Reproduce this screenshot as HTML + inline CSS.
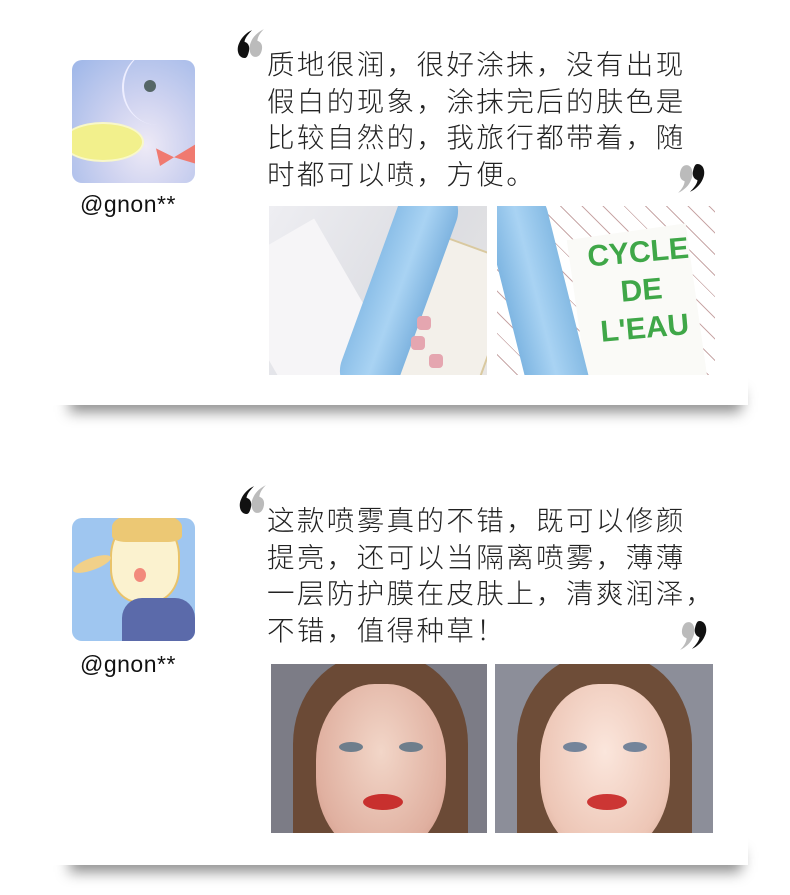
<!DOCTYPE html>
<html><head><meta charset="utf-8"><style>
*{margin:0;padding:0;box-sizing:border-box}
body{width:790px;height:895px;background:#fff;position:relative;overflow:hidden;font-family:"Liberation Sans","Noto Sans CJK SC",sans-serif}
.shadow{position:absolute;height:20px;background:rgba(0,0,0,.45);filter:blur(7px);transform:skewX(-4deg)}
.card{position:absolute;left:50px;width:698px;background:#fff}
.abs{position:absolute}
.av{position:absolute;left:72px;width:123px;height:123px;border-radius:10px;overflow:hidden}
.name{position:absolute;left:80px;font-size:23px;letter-spacing:0.5px;color:#111;font-family:"Liberation Sans",sans-serif}
.txt{position:absolute;left:267px;font-size:27.5px;letter-spacing:2.4px;line-height:36.5px;color:#222;font-family:"Noto Sans CJK SC",sans-serif;font-weight:300;white-space:nowrap}
.img{position:absolute;overflow:hidden}
</style></head><body>

<div class="shadow" style="left:70px;top:392px;width:672px"></div>
<div class="shadow" style="left:70px;top:852px;width:672px"></div>
<div class="card" style="top:0;height:405px"></div>
<div class="card" style="top:440px;height:425px"></div>

<!-- card 1 -->
<div class="av" style="top:60px;background:radial-gradient(ellipse at 60% 70%,#eeeaf6 0,#cfd3f0 40%,#9db6e8 100%)">
  <div class="abs" style="left:-10px;top:62px;width:82px;height:40px;border-radius:50%;background:#f2f08c;border:2px solid #fff8"></div>
  <div class="abs" style="left:72px;top:20px;width:12px;height:12px;border-radius:50%;background:#566"></div>
  <div class="abs" style="left:50px;top:-10px;width:70px;height:75px;border-left:2px solid #eef;border-radius:50%"></div>
  <div class="abs" style="left:84px;top:84px;width:40px;height:22px;background:#f07a70;clip-path:polygon(0 20%,45% 60%,100% 0,100% 90%,45% 60%,10% 100%)"></div>
</div>
<div class="name" style="top:191px">@gnon**</div>
<svg class="abs" style="left:236px;top:28px" width="30" height="30" viewBox="0 0 28 28">
<path d="M18 27c-5 0-7-8-4-14 2-5 6-9 12-12-4 4-6 8-6 11 4 1 5 5 4 9-1 4-3 6-6 6z" fill="#bbb"/>
<path d="M8 28c-6 0-8-8-5-14 2-5 7-10 12-12-4 4-7 8-7 11 4 1 5 5 4 9-1 4-2 6-4 6z" fill="#111"/>
</svg>
<div class="txt" style="top:44px">质地很润，很好涂抹，没有出现<br>假白的现象，涂抹完后的肤色是<br>比较自然的，我旅行都带着，随<br>时都可以喷，方便。</div>
<svg class="abs" style="left:676px;top:164px;transform:rotate(180deg)" width="30" height="30" viewBox="0 0 28 28">
<path d="M18 27c-5 0-7-8-4-14 2-5 6-9 12-12-4 4-6 8-6 11 4 1 5 5 4 9-1 4-3 6-6 6z" fill="#bbb"/>
<path d="M8 28c-6 0-8-8-5-14 2-5 7-10 12-12-4 4-7 8-7 11 4 1 5 5 4 9-1 4-2 6-4 6z" fill="#111"/>
</svg>

<div class="img" style="left:269px;top:206px;width:218px;height:169px;background:linear-gradient(120deg,#eeeef2,#dcdde2 60%,#e8e6e4)">
  <div class="abs" style="left:-20px;top:30px;width:110px;height:150px;background:#f6f5f7;transform:rotate(-30deg)"></div>
  <div class="abs" style="left:150px;top:40px;width:80px;height:150px;background:#f3f0ea;border:2px solid #d9c9a0;transform:rotate(20deg)"></div>
  <div class="abs" style="left:100px;top:-30px;width:60px;height:230px;border-radius:30px;background:linear-gradient(90deg,#8cbfe8,#a9d3f3 50%,#7fb4e0);transform:rotate(20deg)"></div>
  <div class="abs" style="left:148px;top:110px;width:14px;height:14px;border-radius:4px;background:#e5a6b0"></div>
  <div class="abs" style="left:142px;top:130px;width:14px;height:14px;border-radius:4px;background:#e5a6b0"></div>
  <div class="abs" style="left:160px;top:148px;width:14px;height:14px;border-radius:4px;background:#e5a6b0"></div>
</div>
<div class="img" style="left:497px;top:206px;width:218px;height:169px;background:repeating-linear-gradient(45deg,#fff 0 14px,#c9a8a8 14px 15px),#fff">
  <div class="abs" style="left:80px;top:25px;width:120px;height:155px;background:#fafaf7;transform:rotate(-8deg)"></div>
  <div class="abs" style="left:92px;top:28px;font:bold 30px 'Liberation Sans',sans-serif;color:#3fa748;transform:rotate(-5deg);line-height:38px;text-align:center;width:105px">CYCLE<br>DE<br>L'EAU</div>
  <div class="abs" style="left:10px;top:-20px;width:62px;height:230px;border-radius:30px;background:linear-gradient(90deg,#7fb6e2,#a9d3f3 50%,#86bbe4);transform:rotate(-14deg)"></div>
</div>

<!-- card 2 -->
<div class="av" style="top:518px;background:#9fc6f0">
  <div class="abs" style="left:38px;top:0px;width:70px;height:85px;border-radius:45% 45% 40% 40%;background:#fbf2cf;border:2px solid #e9c36a"></div>
  <div class="abs" style="left:40px;top:-6px;width:70px;height:30px;background:#ecc874;border-radius:50% 50% 20% 20%"></div>
  <div class="abs" style="left:50px;top:80px;width:73px;height:50px;background:#5b6aaa;border-radius:20px 20px 0 0"></div>
  <div class="abs" style="left:62px;top:50px;width:12px;height:14px;border-radius:50%;background:#f28a7c"></div>
  <div class="abs" style="left:0px;top:40px;width:40px;height:12px;background:#f1d089;border-radius:50%;transform:rotate(-20deg)"></div>
</div>
<div class="name" style="top:651px">@gnon**</div>
<svg class="abs" style="left:238px;top:484px" width="30" height="30" viewBox="0 0 28 28">
<path d="M18 27c-5 0-7-8-4-14 2-5 6-9 12-12-4 4-6 8-6 11 4 1 5 5 4 9-1 4-3 6-6 6z" fill="#bbb"/>
<path d="M8 28c-6 0-8-8-5-14 2-5 7-10 12-12-4 4-7 8-7 11 4 1 5 5 4 9-1 4-2 6-4 6z" fill="#111"/>
</svg>
<div class="txt" style="top:500px">这款喷雾真的不错，既可以修颜<br>提亮，还可以当隔离喷雾，薄薄<br>一层防护膜在皮肤上，清爽润泽，<br>不错，值得种草！</div>
<svg class="abs" style="left:678px;top:621px;transform:rotate(180deg)" width="30" height="30" viewBox="0 0 28 28">
<path d="M18 27c-5 0-7-8-4-14 2-5 6-9 12-12-4 4-6 8-6 11 4 1 5 5 4 9-1 4-3 6-6 6z" fill="#bbb"/>
<path d="M8 28c-6 0-8-8-5-14 2-5 7-10 12-12-4 4-7 8-7 11 4 1 5 5 4 9-1 4-2 6-4 6z" fill="#111"/>
</svg>

<div class="img" style="left:271px;top:664px;width:216px;height:169px;background:#7c7c86">
  <div class="abs" style="left:22px;top:-10px;width:175px;height:200px;border-radius:45% 45% 10% 10%;background:#6b4a36"></div>
  <div class="abs" style="left:45px;top:20px;width:130px;height:170px;border-radius:45%;background:radial-gradient(ellipse at 50% 40%,#f2d6c8,#e0b0a0 70%,#c98f7e)"></div>
  <div class="abs" style="left:68px;top:78px;width:24px;height:10px;border-radius:50%;background:#6e7e8c"></div>
  <div class="abs" style="left:128px;top:78px;width:24px;height:10px;border-radius:50%;background:#6e7e8c"></div>
  <div class="abs" style="left:92px;top:130px;width:40px;height:16px;border-radius:50%;background:#c8302e"></div>
</div>
<div class="img" style="left:495px;top:664px;width:218px;height:169px;background:#8c8e99">
  <div class="abs" style="left:22px;top:-10px;width:175px;height:200px;border-radius:45% 45% 10% 10%;background:#6e4d38"></div>
  <div class="abs" style="left:45px;top:20px;width:130px;height:170px;border-radius:45%;background:radial-gradient(ellipse at 50% 40%,#fbe6dc,#edc6b6 70%,#d4a390)"></div>
  <div class="abs" style="left:68px;top:78px;width:24px;height:10px;border-radius:50%;background:#74849a"></div>
  <div class="abs" style="left:128px;top:78px;width:24px;height:10px;border-radius:50%;background:#74849a"></div>
  <div class="abs" style="left:92px;top:130px;width:40px;height:16px;border-radius:50%;background:#cc3634"></div>
</div>
</body></html>
